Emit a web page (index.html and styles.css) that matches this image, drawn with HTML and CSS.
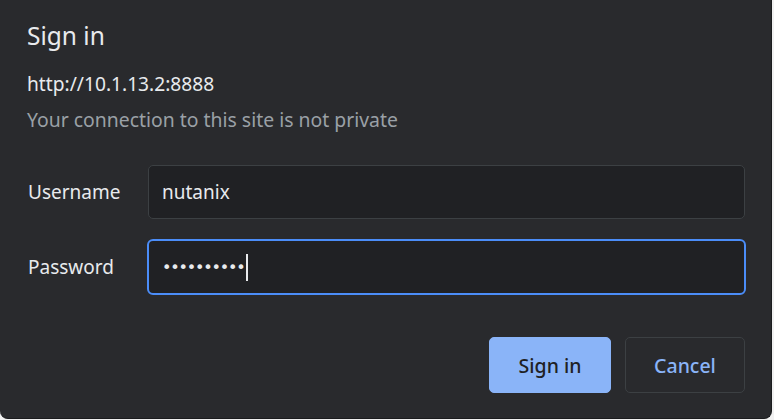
FILE: index.html
```html
<!DOCTYPE html>
<html>
<head>
<meta charset="utf-8">
<title>Sign in</title>
<link rel="stylesheet" href="styles.css">
</head>
<body>
<div class="dialog">
  <h1 class="title">Sign in</h1>
  <div class="origin">http://10.1.13.2:8888</div>
  <div class="warning">Your connection to this site is not private</div>
  <div class="form">
    <label class="label">Username</label>
    <div class="field">nutanix</div>
    <label class="label">Password</label>
    <div class="field focused"><span class="dots">••••••••••</span><span class="caret"></span></div>
  </div>
  <div class="actions">
    <button class="btn primary">Sign in</button>
    <button class="btn secondary">Cancel</button>
  </div>
</div>
</body>
</html>
```
FILE: styles.css
```css
html, body {
  margin: 0;
  padding: 0;
  background: #f1f1f1;
}
body {
  width: 774px;
  height: 420px;
  overflow: hidden;
  font-family: "Segoe UI", "Noto Sans", "Open Sans", sans-serif;
  color: #e8eaed;
}
.dialog {
  box-sizing: border-box;
  width: 772px;
  height: 419px;
  background: #292a2d;
  border-right: 1px solid #1b1c1e;
  border-bottom: 1px solid #1b1c1e;
  border-radius: 0 0 8px 8px;
  padding: 20px 26px 0 27px;
}
.title {
  margin: 0;
  font-size: 24.5px;
  font-weight: 400;
  line-height: 32px;
  color: #e8eaed;
}
.origin {
  margin-top: 20px;
  font-size: 19.2px;
  line-height: 24px;
  color: #e8eaed;
}
.warning {
  margin-top: 12px;
  font-size: 19.4px;
  line-height: 24px;
  color: #9aa0a6;
}
.form {
  margin-top: 33px;
  display: grid;
  grid-template-columns: 121px 1fr;
  row-gap: 20px;
  align-items: center;
}
.label {
  font-size: 19px;
  padding-left: 1px;
}
.field {
  box-sizing: border-box;
  height: 54px;
  background: #202124;
  border: 1px solid #3c4043;
  border-radius: 5px;
  padding: 0 13px;
  display: flex;
  align-items: center;
  font-size: 19px;
  color: #e8eaed;
}
.field.focused {
  border: 2.5px solid #4b8df8;
  border-radius: 6px;
  margin-left: -1px;
  margin-right: -1px;
  height: 56px;
  padding-left: 13px;
}
.dots {
  font-size: 16px;
  letter-spacing: -1.2px;
  font-family: "DejaVu Sans", sans-serif;
}
.caret {
  display: inline-block;
  width: 1.5px;
  height: 27px;
  background: #e8eaed;
  margin-left: 2px;
}
.actions {
  margin-top: 42px;
  display: flex;
  justify-content: flex-end;
  gap: 14px;
}
.btn {
  box-sizing: border-box;
  height: 56px;
  border-radius: 5px;
  font-family: "Segoe UI", "Noto Sans", "Open Sans", sans-serif;
  font-size: 19.5px;
  font-weight: 500;
  cursor: pointer;
}
.primary {
  width: 122px;
  background: #8ab4f8;
  color: #202124;
  border: 1px solid #8ab4f8;
}
.secondary {
  width: 120px;
  background: #292a2d;
  color: #8ab4f8;
  border: 1px solid #3c4043;
}
```
